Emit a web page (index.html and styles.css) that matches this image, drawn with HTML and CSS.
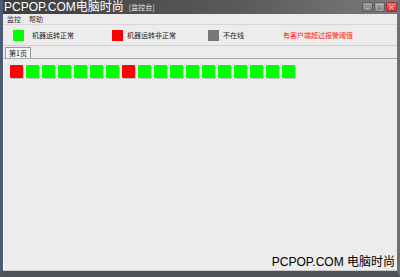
FILE: index.html
```html
<!DOCTYPE html>
<html lang="zh">
<head>
    <meta charset="UTF-8">
    <title>监控台</title>
    <link rel="stylesheet" href="styles.css">
</head>
<body>
    <div class="window">
        <div class="titlebar">
            <span class="brand">PCPOP.COM电脑时尚</span>
            <span class="caption">[监控台]</span>
            <div class="controls">
                <span class="btn">&#8211;</span>
                <span class="btn">&#9633;</span>
                <span class="btn close">&#215;</span>
            </div>
        </div>
        <div class="menubar">
            <span>监控</span>
            <span>帮助</span>
        </div>
        <div class="legend">
            <div class="item ok"><i></i>机器运转正常</div>
            <div class="item bad"><i></i>机器运转非正常</div>
            <div class="item off"><i></i>不在线</div>
            <div class="alarm">有客户端超过报警阈值</div>
        </div>
        <div class="tabs">
            <span class="tab">第1页</span>
        </div>
        <div class="panel">
            <div class="grid">
                <span class="cell red"></span>
                <span class="cell"></span>
                <span class="cell"></span>
                <span class="cell"></span>
                <span class="cell"></span>
                <span class="cell"></span>
                <span class="cell"></span>
                <span class="cell red"></span>
                <span class="cell"></span>
                <span class="cell"></span>
                <span class="cell"></span>
                <span class="cell"></span>
                <span class="cell"></span>
                <span class="cell"></span>
                <span class="cell"></span>
                <span class="cell"></span>
                <span class="cell"></span>
                <span class="cell"></span>
            </div>
        </div>
        <div class="watermark">PCPOP.COM 电脑时尚</div>
    </div>
</body>
</html>
```

FILE: styles.css
```css
body {
    margin: 0;
    font-family: "Noto Sans CJK SC", "Liberation Sans", sans-serif;
    background: #ececec;
}
.window {
    position: relative;
    width: 400px;
    height: 277px;
    box-sizing: border-box;
    display: flex;
    flex-direction: column;
    border-left: 3px solid #4d5a73;
    border-right: 3px solid #6a6f78;
    border-bottom: 6px solid #4f5355;
    box-shadow: inset 0 -1px 0 #c9c9c9;
    background: #ececec;
    overflow: hidden;
}
.window::after {
    content: "";
    position: absolute;
    left: -3px;
    right: -3px;
    bottom: -6px;
    height: 2px;
    background: #5a9a3c;
}
.titlebar {
    height: 14px;
    display: flex;
    align-items: center;
    background: linear-gradient(to right, #3e3e40, #5a5a5c 60%, #7c7c7e);
    color: #fff;
    margin-left: -3px;
    margin-right: -3px;
    padding-left: 4px;
}
.brand {
    font-family: "Liberation Sans", "Noto Sans CJK SC", sans-serif;
    font-size: 12px;
    line-height: 13px;
    color: #fff;
    margin-top: 1px;
}
.caption {
    font-size: 7px;
    line-height: 9px;
    color: #e8e8e8;
    margin-left: 5px;
}
.controls {
    margin-left: auto;
    margin-right: 3px;
    display: flex;
    gap: 1px;
}
.btn {
    width: 9px;
    height: 8px;
    background: linear-gradient(#a4a4a4, #7a7a7a);
    border: 1px solid #5c5c5c;
    border-radius: 1px;
    font-size: 7px;
    line-height: 8px;
    text-align: center;
    color: #eee;
}
.btn.close {
    background: linear-gradient(#f07070, #d03030);
    border-color: #a03030;
    color: #fff;
}
.menubar {
    height: 10px;
    display: flex;
    gap: 8px;
    padding-left: 4px;
    font-size: 7px;
    line-height: 10px;
    color: #333;
    background: #ececec;
    border-bottom: 1px solid #d8d8d8;
}
.legend {
    height: 20px;
    display: flex;
    align-items: center;
    padding-left: 10px;
    font-size: 7px;
    color: #222;
    border-bottom: 1px solid #d0d0d0;
}
.item {
    display: flex;
    align-items: center;
}
.item i {
    width: 11px;
    height: 11px;
    margin-right: 8px;
}
.ok { width: 99px; }
.ok i { background: #00ff00; }
.bad { width: 96px; }
.bad i { background: #ff0000; margin-right: 4px; }
.off { width: 75px; }
.off i { background: #777; margin-right: 4px; }
.alarm {
    color: #ff2020;
}
.tabs {
    height: 12px;
    padding-left: 2px;
    display: flex;
    align-items: flex-end;
}
.tab {
    font-size: 7px;
    line-height: 10px;
    padding: 0 3px;
    border: 1px solid #999;
    border-bottom: none;
    background: #f4f4f4;
    color: #222;
}
.panel {
    flex: 1;
    border-top: 1px solid #aaa;
    border-left: 1px solid #fff;
    padding: 6px 0 0 6px;
    margin-bottom: 1px;
}
.grid {
    display: flex;
    gap: 3px;
}
.cell {
    width: 13px;
    height: 13px;
    background: #00ff00;
    border-radius: 1px;
    box-shadow: 1px 1px 0 #b8c8b8;
}
.cell.red {
    background: #ff0000;
}
.watermark {
    position: absolute;
    right: 2px;
    bottom: 2px;
    font-family: "Liberation Sans", "Noto Sans CJK SC", sans-serif;
    font-size: 12px;
    color: #000;
}
```
